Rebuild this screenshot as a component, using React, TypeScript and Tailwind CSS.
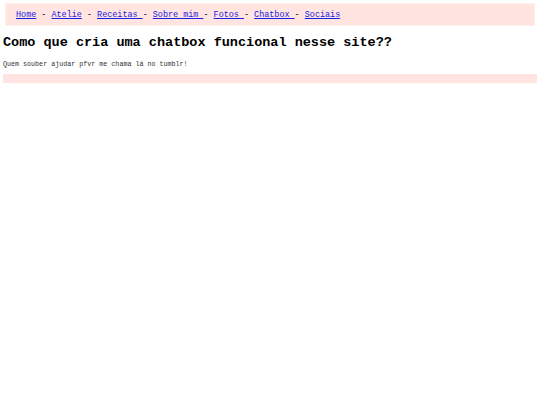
export default function App() {
  const links = ["Home", "Atelie", "Receitas ", "Sobre mim ", "Fotos ", "Chatbox ", "Sociais"];
  return (
    <div className="w-[540px] h-[405px] bg-white px-[3px] pt-[3px] font-['Liberation_Mono',monospace] text-black">
      <div className="mx-[2px] h-[23px] bg-[#ffe4e1] border border-[#fff0ea] flex items-center pl-[10px] pt-[1px] text-[8.45px] whitespace-pre">
        {links.map((l, i) => (
          <span key={i}>
            {i > 0 && <span>{l === "Atelie" || l === "Receitas " || l === "Home" ? " - " : "- "}</span>}
            <a href="#" className="text-[#2020e0] underline">{l}</a>
          </span>
        ))}
      </div>
      <h1 className="mt-[9px] text-[13.5px] leading-[16px] font-bold">Como que cria uma chatbox funcional nesse site??</h1>
      <p className="mt-[9px] text-[6.7px] leading-[8px] text-[#333]">Quem souber ajudar pfvr me chama lá no tumblr!</p>
      <div className="mt-[6px] h-[9px] bg-[#ffe4e1]" />
    </div>
  );
}
